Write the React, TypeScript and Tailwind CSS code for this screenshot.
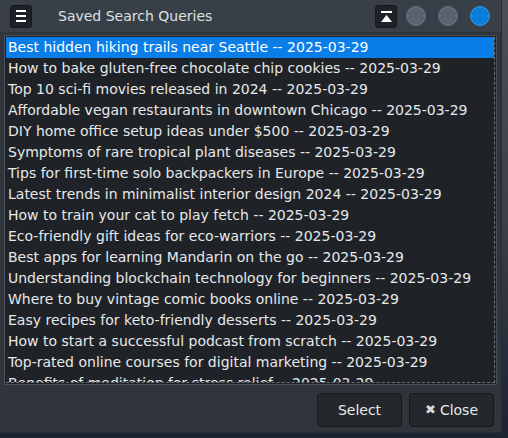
import React, { useState } from "react";

const queries = [
    "Best hidden hiking trails near Seattle",
    "How to bake gluten-free chocolate chip cookies",
    "Top 10 sci-fi movies released in 2024",
    "Affordable vegan restaurants in downtown Chicago",
    "DIY home office setup ideas under $500",
    "Symptoms of rare tropical plant diseases",
    "Tips for first-time solo backpackers in Europe",
    "Latest trends in minimalist interior design 2024",
    "How to train your cat to play fetch",
    "Eco-friendly gift ideas for eco-warriors",
    "Best apps for learning Mandarin on the go",
    "Understanding blockchain technology for beginners",
    "Where to buy vintage comic books online",
    "Easy recipes for keto-friendly desserts",
    "How to start a successful podcast from scratch",
    "Top-rated online courses for digital marketing",
    "Benefits of meditation for stress relief",
];

export default function App() {
    const [selected, setSelected] = useState(0);

    return (
        <div
            className="w-[508px] h-[438px] flex bg-gradient-to-b from-[#4a4f58] via-[#3a3f4a] to-[#1c2230] overflow-hidden"
            style={{ fontFamily: '"DejaVu Sans", sans-serif' }}
        >
            <div className="w-[502px] h-[433px] flex flex-col bg-[#30353b] border-r border-b border-[#272b30]">
                {/* TITLE BAR */}
                <div className="h-[32px] shrink-0 flex items-center bg-[#393f46] px-[10px]">
                    <button className="w-[22px] h-[23px] rounded-[3px] bg-[#1e2226] border border-[#15181b] flex flex-col items-center justify-center gap-[3px]">
                        <span className="block w-[10px] h-[2px] bg-white"></span>
                        <span className="block w-[10px] h-[2px] bg-white"></span>
                        <span className="block w-[10px] h-[2px] bg-white"></span>
                    </button>
                    <div className="ml-[26px] text-[14px] text-[#dde1e4]">Saved Search Queries</div>
                    <div className="ml-auto flex items-center">
                        <button className="w-[22px] h-[23px] rounded-[3px] bg-[#1e2226] border border-[#15181b] flex flex-col items-center justify-center">
                            <span className="block w-[11px] h-[2px] bg-white"></span>
                            <svg width="11" height="7" viewBox="0 0 11 7" className="mt-[2px]">
                                <polygon points="5.5,0 11,7 0,7" fill="white" />
                            </svg>
                        </button>
                        <span className="ml-[9px] w-[20px] h-[20px] rounded-full bg-[#596470] border border-[#6b7682]"></span>
                        <span className="ml-[12px] w-[20px] h-[20px] rounded-full bg-[#596470] border border-[#6b7682]"></span>
                        <span className="ml-[12px] w-[20px] h-[20px] rounded-full bg-[#0a7fd9] border border-[#2d9af0]"></span>
                    </div>
                    <div className="w-[1px]"></div>
                </div>

                {/* LIST */}
                <div className="px-[4px] pt-[3px]">
                    <div className="h-[350px] border border-[#4a5058] bg-[#1f2327] p-[1px] overflow-hidden">
                        <div className="h-full border-r border-b border-dashed border-[#6a7078] overflow-hidden">
                            {queries.map((q, i) => (
                                <div
                                    key={q}
                                    onClick={() => setSelected(i)}
                                    className={
                                        "h-[21px] leading-[21px] pl-[2px] text-[14px] whitespace-nowrap " +
                                        (i === selected ? "bg-[#0a7ee8] text-white" : "text-[#e6e8ea]")
                                    }
                                >
                                    {q} -- 2025-03-29
                                </div>
                            ))}
                        </div>
                    </div>
                </div>

                {/* ACTION BUTTONS */}
                <div className="flex justify-end gap-[7px] pr-[7px] pt-[8px]">
                    <button className="w-[85px] h-[34px] rounded-[4px] bg-[#24282d] border border-[#16191c] text-[14px] text-[#e6e8ea]">
                        Select
                    </button>
                    <button className="w-[85px] h-[34px] rounded-[4px] bg-[#24282d] border border-[#16191c] text-[14px] text-[#e6e8ea] flex items-center justify-center gap-[4px]">
                        <span className="text-[13px] text-[#d8dadc]">✖</span>
                        Close
                    </button>
                </div>
            </div>
        </div>
    );
}
